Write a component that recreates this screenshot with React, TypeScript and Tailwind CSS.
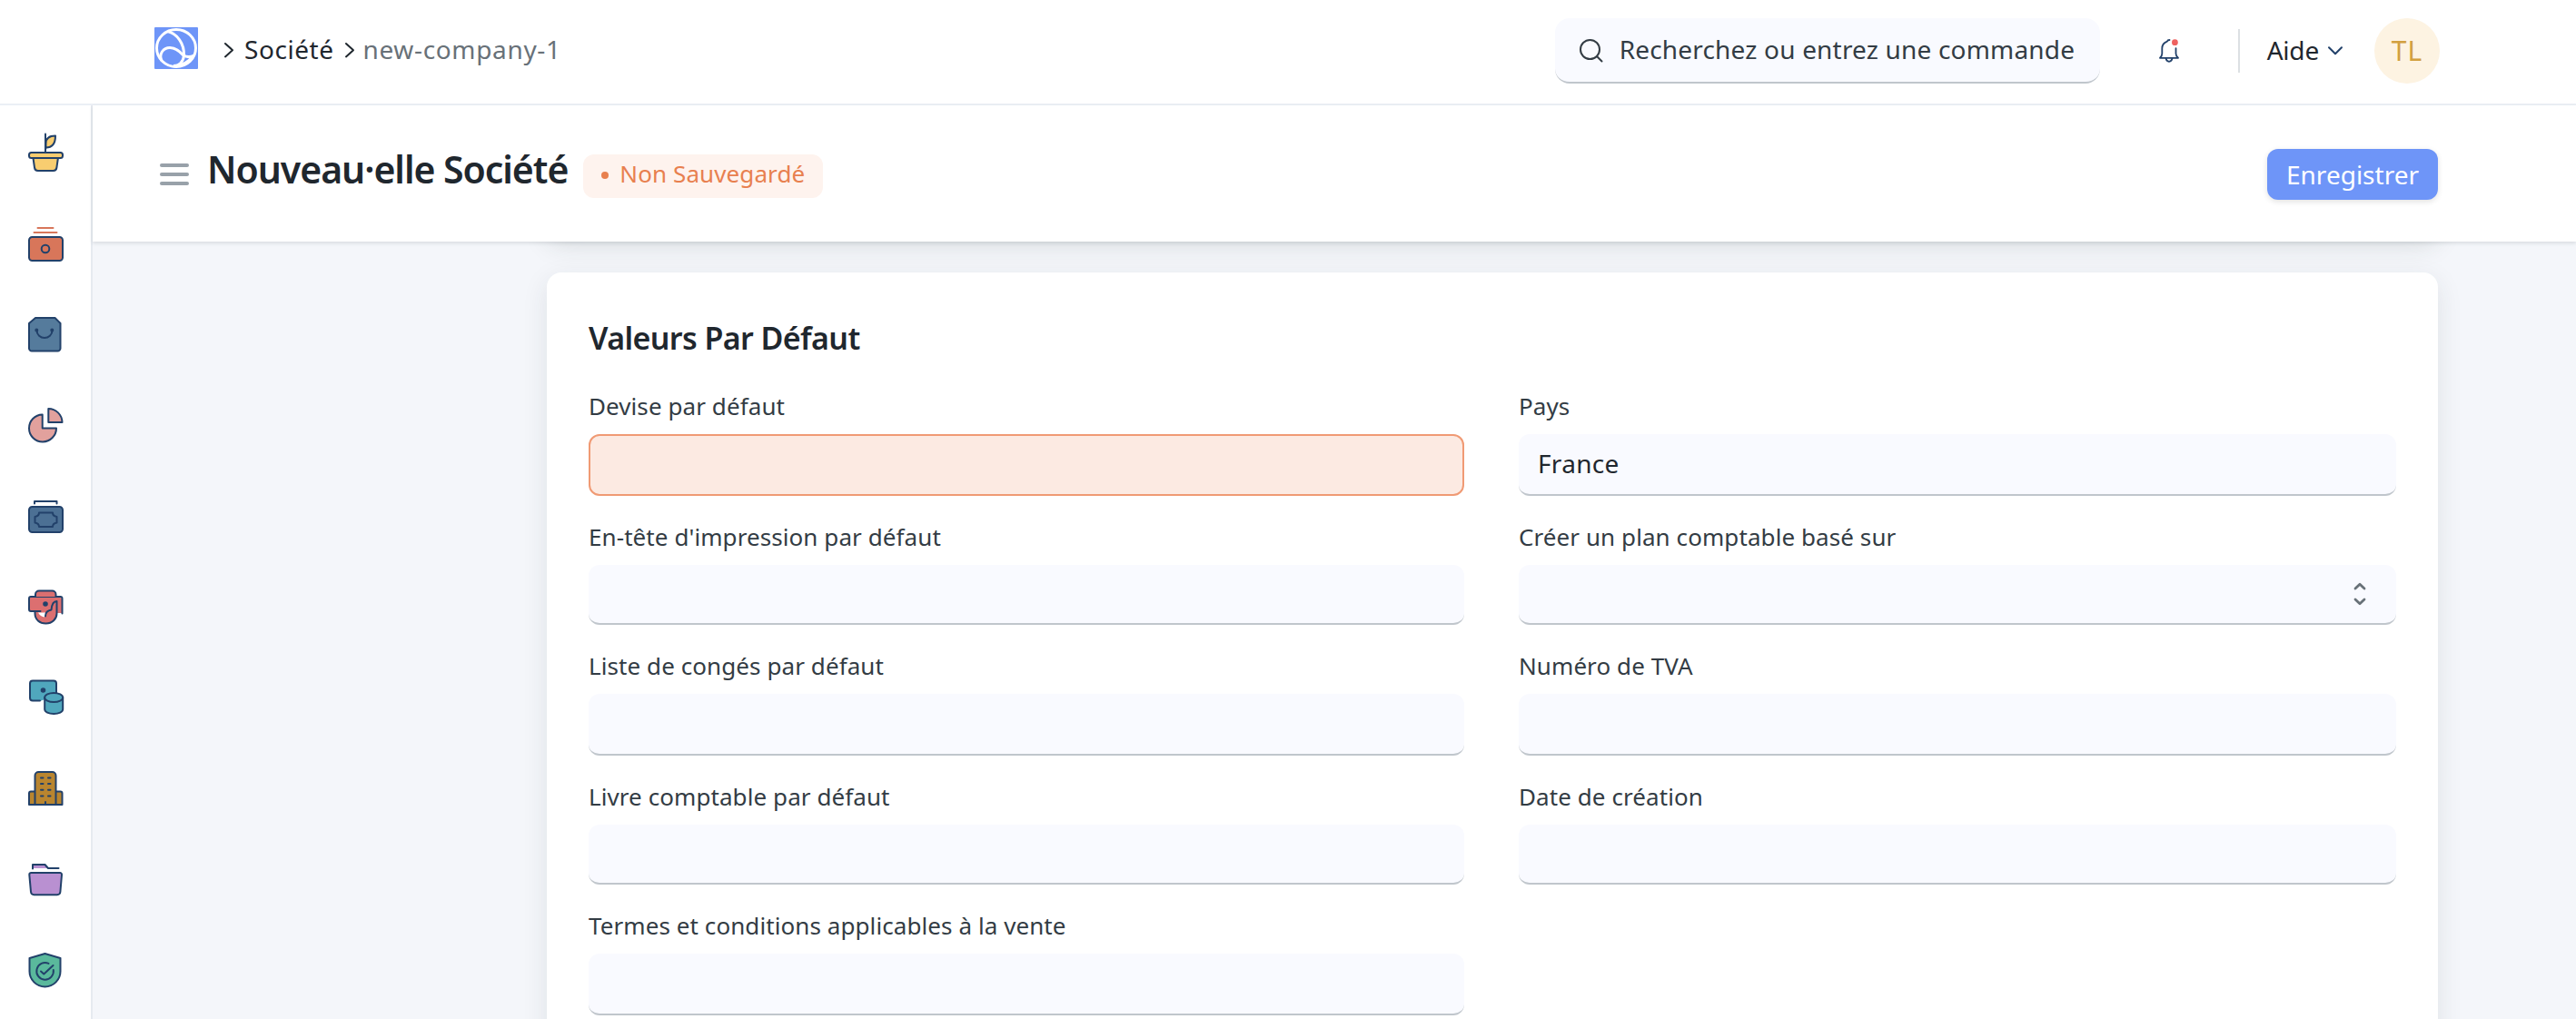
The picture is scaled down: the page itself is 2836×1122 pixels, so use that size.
import type { ReactNode } from "react";

const NAVY = "#22416a";

const sidebarIcons: ReactNode[] = [
  <>
    <path d="M30.500 25.500V20c0-6 4-8.500 10.500-8.500c0 8.500-4 13-10.500 13z" fill="#f8cd70" />
    <path d="M30 9.500V30" />
    <path d="M16.500 36l1.500 10.500c.3 2.200 1.700 3.500 3.700 3.500h17c2 0 3.400-1.300 3.700-3.500L43.900 36z" fill="#f8cd70" />
    <rect x="12" y="30" width="37" height="6" rx="2.500" fill="#f8cd70" />
  </>,
  <>
    <path d="M21.500 13h17M17.500 18h25" stroke="#d8765a" />
    <rect x="12" y="23" width="37" height="26" rx="3.500" fill="#d8765a" />
    <circle cx="30" cy="36" r="4.300" />
  </>,
  <>
    <path d="M19 12h21.500l6 6v27.500a3 3 0 0 1-3 3H15a3 3 0 0 1-3-3V18z" fill="#557b9c" />
    <path d="M20.500 26c0 4.500 4 8 8.500 8s8.500-3.500 8.500-8" />
    <circle cx="20.300" cy="25.500" r="1" fill={NAVY} />
    <circle cx="37.300" cy="25.500" r="1" fill={NAVY} />
  </>,
  <>
    <path d="M26.700 18.500V33.500H42A15 15 0 1 1 26.700 18.500z" fill="#e2a19d" />
    <path d="M33.300 12A15.300 15.300 0 0 1 48.500 27H33.300z" fill="#e2a19d" />
  </>,
  <>
    <path d="M18 16.500v-2.500h24.500v2.500" />
    <rect x="12" y="20" width="37" height="28" rx="3.500" fill="#4c7094" />
    <path d="M23 26.500h15c0 2.500 1.500 4 4.500 4.500v6.500c-3 .5-4.500 2-4.500 4.500H23c0-2.500-1.500-4-4.500-4.500V31c3-.5 4.500-2 4.500-4.500z" />
  </>,
  <>
    <path d="M19 20v-3.500a4 4 0 0 1 4-4h14.500a4 4 0 0 1 4 4V20h4.500a2.500 2.500 0 0 1 2.500 2.500V37l-5.500 0c0 7-5.500 11.500-12.200 11.500S18.500 44 18.500 37v-2H14.500a2.500 2.500 0 0 1-2.500-2.500V21.500a2 2 0 0 1 2-1.500z" fill="#dc6f70" stroke="none" />
    <path d="M22 36.500h8.500l-1.500 5c-3-.5-5.500-2-7-5z" fill="#fff" stroke="none" />
    <path d="M19 19v-2.500a4 4 0 0 1 4-4h14.500a4 4 0 0 1 4 4V19" />
    <path d="M18.500 19.500h24" strokeWidth="1" />
    <path d="M24.500 35H14a2 2 0 0 1-2-2V21a2 2 0 0 1 2-2h4.500M42 19h4.500a2 2 0 0 1 2 2v16.500" />
    <path d="M18.500 35v2.500c0 6.500 5 11 12 11s12-5 12-11V24c-4 0-5.500 3.500-6 9.500-3.500.5-6.500 2.500-6.500 7" />
    <circle cx="30" cy="27" r="1.800" fill={NAVY} />
  </>,
  <>
    <path d="M24 33.500H16a3 3 0 0 1-3-3v-16a3 3 0 0 1 3-3h23a3 3 0 0 1 3 3v11L29.500 28v4l-4 1.500z" fill="#50a7bd" stroke="none" />
    <path d="M24 33.500H16a3 3 0 0 1-3-3v-16a3 3 0 0 1 3-3h23a3 3 0 0 1 3 3V25" />
    <circle cx="27.500" cy="22" r="1.800" fill={NAVY} />
    <path d="M29.200 30v13c0 3 4.500 5 10 5s10-2 10-5V30z" fill="#50a7bd" />
    <ellipse cx="39.200" cy="30" rx="10" ry="5" fill="#50a7bd" />
  </>,
  <>
    <path d="M12 48V35.500a2 2 0 0 1 2-2h32.500a2 2 0 0 1 2 2V48z" fill="#b9852f" />
    <path d="M18.500 48V16a4 4 0 0 1 4-4h15a4 4 0 0 1 4 4v32z" fill="#b9852f" />
    <path d="M25 18.500h2.500M33 18.500h2.500M25 25h2.500M33 25h2.500M25 31.800h2.500M33 31.800h2.500M25 38.500h2.500M33 38.500h2.500M30 45v3" />
  </>,
  <>
    <path d="M16 18v-4h14l3 4z" fill="#b990d1" stroke="none" />
    <path d="M16 18.500V14h13.500l3.500 4h11.500" />
    <path d="M14.500 23h31.500a2 2 0 0 1 2 2.200l-1.600 18.800a3.500 3.500 0 0 1-3.500 3.200H17.500a3.500 3.500 0 0 1-3.500-3.200L12.300 25.200A2 2 0 0 1 14.500 23z" fill="#b990d1" />
  </>,
  <>
    <path d="M29.500 12l17 5v14.500c0 9-7.500 17-17 17s-17-8-17-17V17z" fill="#5ab99c" />
    <path d="M33.500 22.900a9.300 9.300 0 1 0 5.300 7.100" />
    <path d="M25 31.500l3.300 3L38.500 25" />
  </>,
];

function Chevron() {
  return (
    <svg className="h-[18px] w-3" viewBox="0 0 12 18" fill="none" stroke="#1f272e" strokeWidth="2" strokeLinecap="round" strokeLinejoin="round">
      <path d="M2 2l8 7.200-8 7.200" />
    </svg>
  );
}

interface FieldProps {
  label: string;
  value?: string;
  required?: boolean;
  select?: boolean;
  short?: boolean;
}

function Field({ label, value, required, select, short }: FieldProps) {
  return (
    <div className="flex flex-col gap-[13px]">
      <label className="pt-px text-[26px] leading-9 tracking-[0.08px] text-[#333c44]">{label}</label>
      <div
        className={`flex items-center rounded-xl px-[21px] pb-[3px] text-[28px] leading-9 tracking-[0.3px] text-[#1f272e] ${short ? "h-[66px]" : "h-[68px]"} ${
          required ? "border-2 border-[#f09a74] bg-[#fceae2]" : "border-b-2 border-[#c0c6cc] bg-[#f9faff]"
        }`}
      >
        {value}
        {select && (
          <svg className="mt-0.5 mr-3 ml-auto h-[26px] w-3.5" viewBox="0 0 14 26" fill="none" stroke="#687178" strokeWidth="2.800" strokeLinecap="round" strokeLinejoin="round">
            <path d="M2 7l5-4.800L12 7M2 19l5 4.800 5-4.800" />
          </svg>
        )}
      </div>
    </div>
  );
}

export default function App() {
  return (
    <div className="flex h-[1122px] w-[2836px] flex-col overflow-hidden bg-[#f4f6fa] font-['Noto_Sans','Liberation_Sans',sans-serif] text-[#1f272e]">
      <header className="flex h-[116px] shrink-0 items-start justify-between border-b-2 border-[#ebeff5] bg-white pt-5 pr-[150px] pl-[170px]">
        <div className="flex h-[66px] items-center text-[28px] leading-9">
          <svg className="h-[46px] w-12" viewBox="0 0 48 46" fill="none" stroke="#fff" strokeWidth="3">
            <rect width="48" height="46" rx="1" fill="#6e95f8" stroke="none" />
            <ellipse cx="24" cy="23" rx="21.500" ry="20.500" />
            <path d="M14.500 4.500C25 7 33 18 32.500 31 32 38 27 42.500 21 43" />
            <path d="M8 37C4.500 29 10 22.500 17 22.500 24 22.500 28 27 31.500 30.500 36 33.500 40 33 43.500 31" />
            <path d="M21 42.500C31 42 38 38 42 32" />
          </svg>
          <span className="mt-1 ml-7 flex"><Chevron /></span>
          <span className="mt-px ml-[11px] tracking-[0.55px]">Société</span>
          <span className="mt-1 ml-[11px] flex"><Chevron /></span>
          <span className="mt-px ml-[9px] tracking-[0.65px] text-[#687178]">new-company-1</span>
        </div>
        <div className="flex h-[72px] items-center">
          <div className="flex h-[72px] w-[600px] items-center rounded-2xl border-b-2 border-[#c0c6cc] bg-[#f9faff] pb-[3px] pl-[26px] text-[28px] leading-9 text-[#333c44]">
            <svg className="mt-1 h-7 w-7" viewBox="0 0 28 28" fill="none" stroke="#333c44" strokeWidth="2" strokeLinecap="round">
              <circle cx="12.500" cy="12.500" r="10.500" />
              <path d="M20 20l5.500 5.500" />
            </svg>
            <span className="ml-[17px] tracking-[0.18px]">Recherchez ou entrez une commande</span>
          </div>
          <svg className="ml-16 h-7 w-6" viewBox="0 0 24 28" fill="none" stroke={NAVY} strokeWidth="1.800" strokeLinecap="round" strokeLinejoin="round">
            <path d="M12.500 2c-1.500 0-2.300.6-2.700 1.700C6.500 5 4.300 8 4.300 11.500V17c0 2-.8 3.500-2.300 4.800h20c-1.600-1.300-2.500-2.800-2.500-4.800v-5.800" />
            <path d="M8.500 22.200c.4 2.300 1.800 3.600 3.500 3.600s3.100-1.300 3.500-3.600" />
            <circle cx="18.400" cy="4.700" r="3.400" fill="#ee6260" stroke="none" />
          </svg>
          <div className="ml-16 h-12 w-0.5 bg-[#dce0e3]" />
          <span className="mb-[3px] ml-[30px] text-[28px] leading-9 tracking-[-0.2px]">Aide</span>
          <svg className="ml-[9px] h-3 w-[18px]" viewBox="0 0 18 12" fill="none" stroke={NAVY} strokeWidth="2" strokeLinecap="round" strokeLinejoin="round">
            <path d="M2 2.200l7 7 7-7" />
          </svg>
          <div className="ml-[34px] flex size-[72px] items-center justify-center rounded-full bg-[#fdf3e2] pb-0.5 text-[30px] tracking-[1px] text-[#d2a040]">TL</div>
        </div>
      </header>

      <div className="flex min-h-0 flex-1">
        <nav className="flex w-[102px] shrink-0 flex-col gap-10 border-r-2 border-[#e6eaf0] bg-white pt-[22px] pl-5">
          {sidebarIcons.map((icon, i) => (
            <svg key={i} className="size-[60px] shrink-0" viewBox="0 0 60 60" fill="none" stroke={NAVY} strokeWidth="2" strokeLinecap="round" strokeLinejoin="round">
              {icon}
            </svg>
          ))}
        </nav>

        <main className="flex min-w-0 flex-1 flex-col">
          <div className="z-10 flex h-[150px] shrink-0 items-center bg-white pr-[152px] pl-[74px] shadow-[0_2px_4px_rgba(25,39,52,0.12)]">
            <div className="mt-0.5 flex w-8 flex-col gap-1.5">
              <span className="h-1 rounded-full bg-[#98a1a9]" />
              <span className="h-1 rounded-full bg-[#98a1a9]" />
              <span className="h-1 rounded-full bg-[#98a1a9]" />
            </div>
            <h1 className="mb-[11px] ml-5 text-[41px] leading-[56px] font-semibold tracking-[-1.05px] whitespace-nowrap">Nouveau·elle Société</h1>
            <span className="mt-1.5 ml-[17px] flex h-12 w-[264px] items-center rounded-xl bg-[#fef3ee] pb-1.5 pl-5 text-[26px] leading-9 tracking-[0.1px] whitespace-nowrap text-[#e8804f]">
              <span className="mt-1 mr-3 size-2 rounded-full bg-[#e8804f]" />
              Non Sauvegardé
            </span>
            <button className="mt-0.5 ml-auto flex h-14 w-[188px] items-center justify-center rounded-xl bg-[#6e95f8] text-[28px] leading-9 text-white shadow-[0_2px_6px_rgba(0,0,0,0.12)]">
              Enregistrer
            </button>
          </div>

          <div className="flex min-h-0 flex-1 flex-col pr-[152px] pl-[500px]">
            <div className="-mt-20 h-20 shrink-0 rounded-2xl bg-white shadow-[0_4px_28px_rgba(35,55,50,0.13)]" />
            <section className="mt-[34px] h-[900px] shrink-0 rounded-2xl bg-white px-[46px] pt-[49px] shadow-[0_8px_28px_rgba(35,50,55,0.1)]">
              <h2 className="text-[34px] leading-[46px] font-semibold tracking-[-0.6px]">Valeurs Par Défaut</h2>
              <div className="mt-[33px] grid grid-cols-[964px_966px] gap-x-[60px]">
                <div className="flex flex-col gap-[26px]">
                  <Field label="Devise par défaut" required />
                  <Field label="En-tête d'impression par défaut" short />
                  <Field label="Liste de congés par défaut" />
                  <Field label="Livre comptable par défaut" short />
                  <Field label="Termes et conditions applicables à la vente" />
                </div>
                <div className="flex flex-col gap-[26px]">
                  <Field label="Pays" value="France" />
                  <Field label="Créer un plan comptable basé sur" select short />
                  <Field label="Numéro de TVA" />
                  <Field label="Date de création" short />
                </div>
              </div>
            </section>
          </div>
        </main>
      </div>
    </div>
  );
}
